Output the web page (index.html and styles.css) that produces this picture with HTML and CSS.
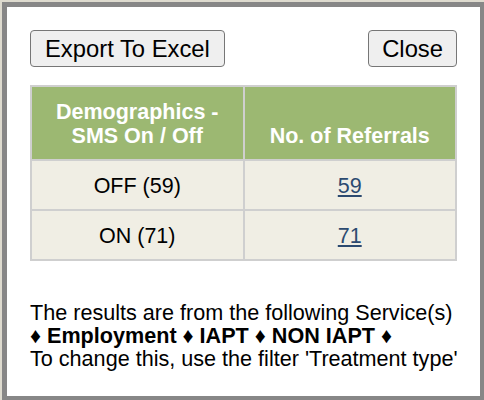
FILE: index.html
```html
<!DOCTYPE html>
<html>
<head>
<meta charset="utf-8">
<link rel="stylesheet" href="styles.css">
</head>
<body>
<div class="backdrop">
  <div class="modal">
    <div class="toolbar">
      <button class="btn">Export To Excel</button>
      <button class="btn">Close</button>
    </div>
    <table class="grid">
      <thead>
        <tr>
          <th>Demographics -<br>SMS On / Off</th>
          <th>No. of Referrals</th>
        </tr>
      </thead>
      <tbody>
        <tr>
          <td>OFF (59)</td>
          <td><a class="num" href="#">59</a></td>
        </tr>
        <tr>
          <td>ON (71)</td>
          <td><a class="num" href="#">71</a></td>
        </tr>
      </tbody>
    </table>
    <div class="note">
      <div>The results are from the following Service(s)</div>
      <div class="services">♦ Employment ♦ IAPT ♦ NON IAPT ♦</div>
      <div>To change this, use the filter 'Treatment type'</div>
    </div>
  </div>
</div>
</body>
</html>
```

FILE: styles.css
```css
html, body {
  margin: 0;
  padding: 0;
  height: 100%;
  overflow: hidden;
}
body {
  background: #dedbcf;
  font-family: "Liberation Sans", Arial, Helvetica, sans-serif;
  color: #000;
}
.backdrop {
  padding: 2px 0 0 2px;
}
.modal {
  width: 427px;
  height: 366px;
  background: #fff;
  border: 5px solid #878787;
  padding: 23px 23px 0 23px;
  box-sizing: content-box;
}
.toolbar {
  display: flex;
  justify-content: space-between;
  align-items: flex-start;
}
.btn {
  font-family: "Liberation Sans", Arial, Helvetica, sans-serif;
  font-size: 23.8px;
  height: 37px;
  padding: 0 14px;
  background: #efefef;
  border: 1px solid #767676;
  border-radius: 4px;
  color: #000;
  line-height: 1;
}
.btn + .btn {
  padding: 0 13px;
}
.grid {
  margin-top: 18px;
  width: 427px;
  border-collapse: collapse;
  table-layout: fixed;
  font-size: 21.5px;
}
.grid th, .grid td {
  border: 2px solid #cfcfcf;
  text-align: center;
  padding: 0;
}
.grid th {
  background: #9cb872;
  color: #fff;
  font-weight: bold;
  height: 74px;
  vertical-align: bottom;
  padding-bottom: 11px;
  line-height: 24px;
  box-sizing: border-box;
}
.grid td {
  background: #f0eee4;
  height: 50px;
  vertical-align: middle;
  padding-top: 2px;
  box-sizing: border-box;
}
.num {
  color: #2c4a70;
  text-decoration: underline;
}
.note {
  margin-top: 40px;
  font-size: 21.6px;
  line-height: 23px;
  white-space: nowrap;
}
.services {
  font-weight: bold;
}
```
